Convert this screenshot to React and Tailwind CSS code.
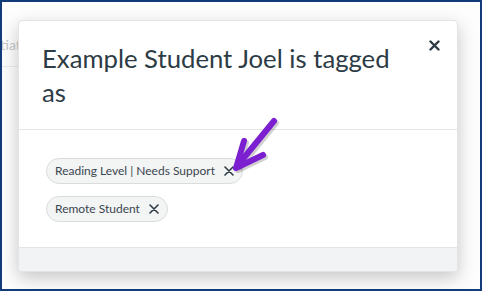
import React from 'react';

const Chip = ({ label }) => (
    <div className="flex items-center gap-[9px] h-[26px] pl-[8px] pr-[8px] rounded-full bg-[#f3f4f4] border border-[#d9dcdf] text-[12px] text-[#3a4650] w-fit">
        <span className="leading-none">{label}</span>
        <svg width="10" height="10" viewBox="0 0 10 10" className="text-[#2d3b45]">
            <path d="M1 1 L9 9 M9 1 L1 9" stroke="currentColor" strokeWidth="1.6" strokeLinecap="round" />
        </svg>
    </div>
);

export default function App() {
    return (
        <div className="relative w-[482px] h-[291px] overflow-hidden border-2 border-[#123b7a] bg-[#fdfdfd] font-['Lato','Noto_Sans',sans-serif]">
            {/* page behind the dialog */}
            <span className="absolute left-[-52px] top-[32px] text-[14px] text-[#c4c7ca]">Differentiation</span>
            <div className="absolute left-0 top-[64px] w-[40px] h-px bg-[#ececec]" />

            <div className="relative pt-[18px] pl-[16px]">
                <div className="relative w-[440px] h-[252px] flex flex-col bg-white rounded-[4px] border border-[#e4e4e4] shadow-[0_6px_18px_rgba(0,0,0,0.22)] overflow-hidden">
                    <div className="pl-[23px] pr-[60px] pt-[20px] pb-[20px] border-b border-[#e2e4e6]">
                        <h2 className="text-[25.7px] leading-[34px] text-[#2d3b45] font-normal">
                            Example Student Joel is tagged as
                        </h2>
                    </div>
                    <button className="absolute right-[17px] top-[19px]">
                        <svg width="11" height="11" viewBox="0 0 11 11">
                            <path d="M1.5 1.5 L9.5 9.5 M9.5 1.5 L1.5 9.5" stroke="#2d3b45" strokeWidth="2.4" strokeLinecap="round" />
                        </svg>
                    </button>
                    <div className="flex-1 flex flex-col gap-[12px] pl-[27px] pt-[28px]">
                        <Chip label="Reading Level | Needs Support" />
                        <Chip label="Remote Student" />
                    </div>
                    <div className="h-[24px] bg-[#f2f3f4] border-t border-[#e2e4e6]" />
                </div>
            </div>

            {/* annotation arrow */}
            <svg className="absolute left-0 top-0" width="482" height="291" viewBox="0 0 482 291">
                <g stroke="rgba(0,0,0,0.18)" strokeWidth="6" strokeLinecap="round" strokeLinejoin="round" fill="none" transform="translate(2 2)">
                    <path d="M272 119 L236 163" />
                    <path d="M242 139 L234 166 L261 153" />
                </g>
                <g stroke="#7b1fd0" strokeWidth="6" strokeLinecap="round" strokeLinejoin="round" fill="none">
                    <path d="M272 119 L236 163" />
                    <path d="M242 139 L234 166 L261 153" />
                </g>
            </svg>
        </div>
    );
}
